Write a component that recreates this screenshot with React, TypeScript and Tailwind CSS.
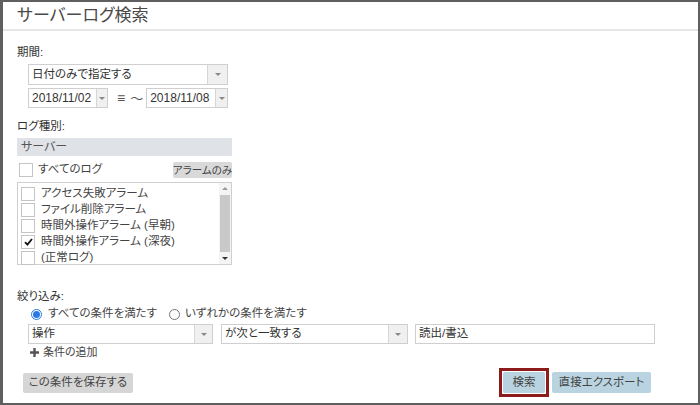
import React from 'react';

const FONT = "font-['Liberation_Sans','Noto_Sans_CJK_JP',sans-serif] [font-feature-settings:'palt']";

// 小さい下向き三角
function Caret() {
  return <span className="block h-0 w-0 border-x-[3px] border-t-[3px] border-x-transparent border-t-[#888]" />;
}

function SelectBox({
  label,
  className,
  btn = 'w-[20px]',
  text = 'text-[11.5px]',
}: {
  label: string;
  className: string;
  btn?: string;
  text?: string;
}) {
  return (
    <div className={`flex border border-[#cfcfcf] bg-white ${className}`}>
      <div className={`flex flex-1 items-center overflow-hidden whitespace-nowrap pl-[3px] text-[#333] ${text}`}>{label}</div>
      <div className={`flex items-center justify-center border-l border-[#d6d6d6] bg-[#f0f0f0] ${btn}`}>
        <Caret />
      </div>
    </div>
  );
}

function Checkbox({ checked = false }: { checked?: boolean }) {
  return (
    <span className="flex h-[14px] w-[14px] shrink-0 items-center justify-center border border-[#c4c4c4] bg-white">
      {checked && (
        <svg width="9" height="8" viewBox="0 0 9 8">
          <path d="M1 4.2 L3.4 6.6 L8 1" fill="none" stroke="#111" strokeWidth="1.8" />
        </svg>
      )}
    </span>
  );
}

function Radio({ checked = false }: { checked?: boolean }) {
  return (
    <span
      className={`flex h-[11px] w-[11px] items-center justify-center rounded-full border ${
        checked ? 'border-[#2a7ae2]' : 'border-[#777]'
      } bg-white`}
    >
      {checked && <span className="h-[7px] w-[7px] rounded-full bg-[#2a7ae2]" />}
    </span>
  );
}

const logItems = [
  { label: 'アクセス失敗アラーム', checked: false },
  { label: 'ファイル削除アラーム', checked: false },
  { label: '時間外操作アラーム (早朝)', checked: false },
  { label: '時間外操作アラーム (深夜)', checked: true },
  { label: '(正常ログ)', checked: false },
];

export default function App() {
  return (
    <div className={`h-[405px] w-[700px] overflow-hidden border-b-2 border-l-[3px] border-r-2 border-t-2 border-[#5f5f5f] bg-white ${FONT}`}>
      {/* ヘッダー */}
      <div className="flex h-[29px] items-center border-b-2 border-[#e6e6e6] pl-[14px] text-[17px] text-[#4a4a4a]">
        サーバーログ検索
      </div>

      <div className="pl-[14px] pr-[20px] text-[11.5px]">
        {/* 期間 */}
        <div className="mt-[13px] h-[16px] leading-[16px] text-[#333]">期間:</div>
        <SelectBox label="日付のみで指定する" className="ml-[11px] mt-[4px] h-[21px] w-[200px]" />
        <div className="ml-[11px] mt-[3px] flex h-[20px] items-center">
          <SelectBox label="2018/11/02" className="h-[20px] w-[80px]" btn="w-[11px]" text="text-[12px]" />
          <span className="ml-[9px] text-[14px] leading-none text-[#555]">≡</span>
          <span className="ml-[5px] text-[13px] leading-none text-[#555]">～</span>
          <SelectBox label="2018/11/08" className="ml-[3px] h-[20px] w-[82px]" btn="w-[12px]" text="text-[12px]" />
        </div>

        {/* ログ種別 */}
        <div className="mt-[10px] h-[16px] leading-[16px] text-[#333]">ログ種別:</div>
        <div className="mt-[4px] w-[215px]">
          <div className="flex h-[18px] items-center bg-[#dfe2e6] pl-[4px] text-[12px] text-[#555]">サーバー</div>
          <div className="mt-[3px] flex h-[21px] items-center">
            <span className="ml-[2px]">
              <Checkbox />
            </span>
            <span className="ml-[5px] text-[#444]">すべてのログ</span>
            <button className="ml-auto h-[16px] w-[59px] whitespace-nowrap rounded-[2px] bg-[#d9d9d9] text-[10.5px] leading-[16px] text-[#444]">
              アラームのみ
            </button>
          </div>
          <div className="mt-[2px] flex h-[83px] border border-[#cfcfcf] bg-white">
            <div className="flex flex-1 flex-col pl-[3px] pt-[3px]">
              {logItems.map((item) => (
                <div key={item.label} className="flex h-[16px] items-center">
                  <Checkbox checked={item.checked} />
                  <span className="ml-[6px] whitespace-nowrap text-[#444]">{item.label}</span>
                </div>
              ))}
            </div>
            {/* スクロールバー */}
            <div className="flex w-[12px] flex-col items-center bg-[#f4f4f4] py-[4px]">
              <span className="block h-0 w-0 border-x-[3px] border-b-[3px] border-x-transparent border-b-[#999]" />
              <div className="mt-[5px] w-[10px] flex-1 bg-[#c9c9c9]" />
              <span className="mt-[5px] block h-0 w-0 border-x-[3px] border-t-[3px] border-x-transparent border-t-[#333]" />
            </div>
          </div>
        </div>

        {/* 絞り込み */}
        <div className="mt-[23px] h-[16px] leading-[16px] text-[#333]">絞り込み:</div>
        <div className="ml-[14px] mt-[2px] flex h-[16px] items-center text-[#444]">
          <Radio checked />
          <span className="ml-[6px]">すべての条件を満たす</span>
          <span className="ml-[12px]">
            <Radio />
          </span>
          <span className="ml-[5px]">いずれかの条件を満たす</span>
        </div>
        <div className="ml-[11px] mt-[2px] flex h-[20px] items-stretch">
          <SelectBox label="操作" className="w-[185px]" btn="w-[18px]" />
          <SelectBox label="が次と一致する" className="ml-[8px] w-[187px]" btn="w-[19px]" />
          <div className="ml-[7px] flex w-[240px] items-center border border-[#cfcfcf] bg-white pl-[3px] text-[#333]">
            読出/書込
          </div>
        </div>
        <div className="ml-[13px] mt-[1px] flex h-[14px] items-center text-[11px] text-[#444]">
          <svg width="9" height="9" viewBox="0 0 9 9">
            <path d="M3.3 0h2.4v3.3H9v2.4H5.7V9H3.3V5.7H0V3.3h3.3z" fill="#555" />
          </svg>
          <span className="ml-[4px]">条件の追加</span>
        </div>

        {/* ボタン */}
        <div className="mt-[9px] flex h-[29px] items-center">
          <button className="ml-[6px] h-[20px] w-[110px] rounded-[2px] bg-[#d6d6d6] text-[#444]">この条件を保存する</button>
          <div className="ml-auto mr-[27px] flex items-center">
            <div className="border-[3px] border-[#8e1b1b] p-px">
              <button className="block h-[21px] w-[42px] rounded-[2px] bg-[#b9d4e0] text-[#444]">検索</button>
            </div>
            <button className="ml-[3px] h-[21px] w-[99px] rounded-[2px] bg-[#b9d4e0] text-[#444]">直接エクスポート</button>
          </div>
        </div>
      </div>
    </div>
  );
}
